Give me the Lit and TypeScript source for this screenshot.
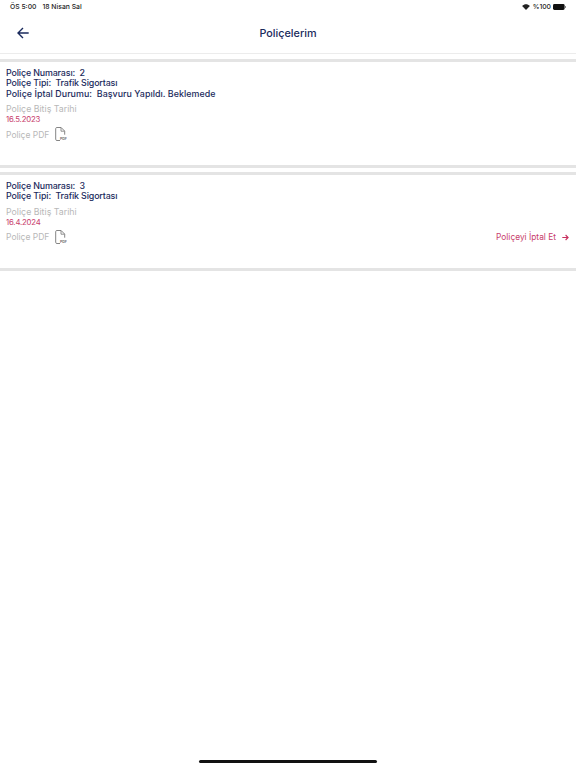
import { LitElement, html, css } from "lit";
import { customElement } from "lit/decorators.js";

const pdfIcon = html`<svg class="pdf" width="12" height="15" viewBox="0 0 12 15" fill="none">
  <path d="M5 13.5H1.9A1.2 1.2 0 0 1 .7 12.3V1.5A1.2 1.2 0 0 1 1.9.5h4.2l3.6 3.6v3.6" stroke="#777" stroke-width=".9"/>
  <path d="M6 .7v3.5h3.5" stroke="#777" stroke-width=".8"/>
  <text x="4.9" y="13.4" font-size="3.6" font-weight="700" font-family="Inter, sans-serif" fill="#777">PDF</text>
</svg>`;

@customElement("app-root")
export class AppRoot extends LitElement {
  static styles = css`
    :host {
      display: block;
      position: relative;
      width: 576px;
      height: 768px;
      overflow: hidden;
      background: #fff;
      font-family: Inter, "Noto Sans", sans-serif;
    }
    .status {
      height: 13px;
      padding: 0 10px;
      display: flex;
      justify-content: space-between;
      align-items: center;
      font-size: 6.8px;
      font-weight: 500;
      color: #222;
    }
    .status-left { display: flex; gap: 6px; }
    .status-right { display: flex; align-items: center; gap: 2px; }
    .wifi { margin-right: 1px; }
    .nav {
      height: 41px;
      display: flex;
      align-items: center;
      justify-content: center;
      position: relative;
      box-sizing: border-box;
      border-bottom: 1px solid #ececec;
      color: #1a2a5c;
      font-size: 10.8px;
      font-weight: 500;
    }
    .back { position: absolute; left: 17px; top: 14px; }
    .list { display: flex; flex-direction: column; padding-top: 5px; gap: 4px; }
    .card {
      box-sizing: border-box;
      border-top: 3px solid #e4e4e4;
      border-bottom: 3px solid #e4e4e4;
      padding: 6px 6px 0;
      color: #1a2a5c;
      font-size: 8.9px;
      line-height: 10.3px;
    }
    .one { height: 109px; }
    .two { height: 99px; }
    .row { white-space: pre; font-weight: 500; letter-spacing: -0.14px; }
    .row.long { letter-spacing: 0.04px; }
    .label { margin-top: 5px; color: #b8b8b8; font-size: 8.8px; line-height: 10px; }
    .date { color: #c8406c; font-size: 7.8px; line-height: 10px; letter-spacing: -0.2px; }
    .pdf-row { display: flex; align-items: center; margin-top: 3px; height: 16px; }
    .pdf-label { color: #b8b8b8; font-size: 8.5px; margin-right: 6px; }
    .cancel {
      margin-left: auto;
      display: flex;
      align-items: center;
      gap: 6px;
      color: #c8406c;
      font-size: 8.4px;
      padding-right: 1px;
    }
    .home {
      position: absolute;
      left: 199px;
      top: 760px;
      width: 178px;
      height: 3px;
      border-radius: 2px;
      background: #111;
    }
  `;

  private card(cls: string, rows: string[], date: string, cancel: boolean) {
    return html`<section class="card ${cls}">
      ${rows.map((r) => html`<div class="row ${r.length > 40 ? "long" : ""}">${r}</div>`)}
      <div class="label">Poliçe Bitiş Tarihi</div>
      <div class="date">${date}</div>
      <div class="pdf-row">
        <span class="pdf-label">Poliçe PDF</span>${pdfIcon}
        ${cancel
          ? html`<span class="cancel">Poliçeyi İptal Et
              <svg width="7" height="7" viewBox="0 0 7 7" fill="none" stroke="#c8305f" stroke-width="1.1">
                <path d="M.3 3.5h5.7M3.6 1l2.5 2.5L3.6 6" />
              </svg></span>`
          : ""}
      </div>
    </section>`;
  }

  render() {
    return html`
      <div class="status">
        <div class="status-left"><span>ÖS 5:00</span><span>18 Nisan Sal</span></div>
        <div class="status-right">
          <svg class="wifi" width="8" height="6" viewBox="0 0 9 7" fill="#222">
            <path d="M4.5 7 0 2.4C2.6-.4 6.4-.4 9 2.4z" />
          </svg>
          <span>%100</span>
          <svg width="13" height="6" viewBox="0 0 13 6">
            <rect width="11.6" height="6" rx="1.4" fill="#111" />
            <rect x="12" y="2" width="1" height="2" fill="#888" />
          </svg>
        </div>
      </div>
      <header class="nav">
        <svg class="back" width="12" height="12" viewBox="0 0 12 12" fill="none" stroke="#1a2a5c" stroke-width="1.4">
          <path d="M11.7 6H1.2M6 1 1 6l5 5" />
        </svg>
        Poliçelerim
      </header>
      <div class="list">
        ${this.card("one", ["Poliçe Numarası:  2", "Poliçe Tipi:  Trafik Sigortası", "Poliçe İptal Durumu:  Başvuru Yapıldı. Beklemede"], "16.5.2023", false)}
        ${this.card("two", ["Poliçe Numarası:  3", "Poliçe Tipi:  Trafik Sigortası"], "16.4.2024", true)}
      </div>
      <div class="home"></div>
    `;
  }
}
